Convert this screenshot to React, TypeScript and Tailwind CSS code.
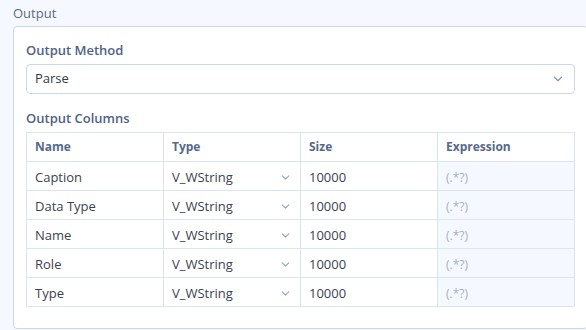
import { ChevronDown } from "lucide-react"

const rows = [
  { name: "Caption", type: "V_WString", size: "10000", expr: "(.*?)" },
  { name: "Data Type", type: "V_WString", size: "10000", expr: "(.*?)" },
  { name: "Name", type: "V_WString", size: "10000", expr: "(.*?)" },
  { name: "Role", type: "V_WString", size: "10000", expr: "(.*?)" },
  { name: "Type", type: "V_WString", size: "10000", expr: "(.*?)" },
]

export default function App() {
  return (
    <div className="w-[586px] h-[330px] overflow-hidden bg-[#f5f8fe] font-['Open_Sans',sans-serif]">
      <div className="h-[26px] pl-[13px] pt-[4px] text-[13px] leading-[18px] text-[#5b6b88]">Output</div>

      <div className="ml-[13px] w-[575px] rounded-[4px] border border-[#cdd7e8] bg-white px-[12px] pt-[14px] pb-[21px]">
        <div className="text-[13px] leading-[18px] font-semibold text-[#4f6285]">Output Method</div>
        <div className="mt-[5px] flex h-[30px] items-center justify-between rounded-[4px] border border-[#cdd7e8] pl-[8px] pr-[9px]">
          <span className="text-[13px] text-[#333a45]">Parse</span>
          <ChevronDown size={14} strokeWidth={2} className="text-[#8797b5]" />
        </div>

        <div className="mt-[15px] text-[13px] leading-[18px] font-semibold text-[#4f6285]">Output Columns</div>

        <table className="mt-[5px] w-[549px] table-fixed border-collapse text-[13px]">
          <colgroup>
            <col className="w-[137px]" />
            <col className="w-[137px]" />
            <col className="w-[137px]" />
            <col />
          </colgroup>
          <thead>
            <tr className="h-[29px]">
              {["Name", "Type", "Size", "Expression"].map((h) => (
                <th
                  key={h}
                  className="border border-[#dce4f0] px-[8px] text-left text-[12px] font-bold text-[#56698a]"
                >
                  {h}
                </th>
              ))}
            </tr>
          </thead>
          <tbody>
            {rows.map((r) => (
              <tr key={r.name} className="h-[29px]">
                <td className="border border-[#dce4f0] px-[8px] pt-[3px] pb-0 text-[#3a4250]">{r.name}</td>
                <td className="border border-[#dce4f0] px-[8px] pt-[3px] pb-0 text-[#3a4250]">
                  <div className="flex items-center justify-between">
                    <span>{r.type}</span>
                    <ChevronDown size={13} strokeWidth={2} className="text-[#95a4c0]" />
                  </div>
                </td>
                <td className="border border-[#dce4f0] px-[8px] pt-[3px] pb-0 text-[#3a4250]">{r.size}</td>
                <td className="border border-[#dce4f0] bg-[#f5f8fe] px-[8px] pt-[3px] pb-0 text-[12px] text-[#a3b0c9]">{r.expr}</td>
              </tr>
            ))}
          </tbody>
        </table>
      </div>
    </div>
  )
}
